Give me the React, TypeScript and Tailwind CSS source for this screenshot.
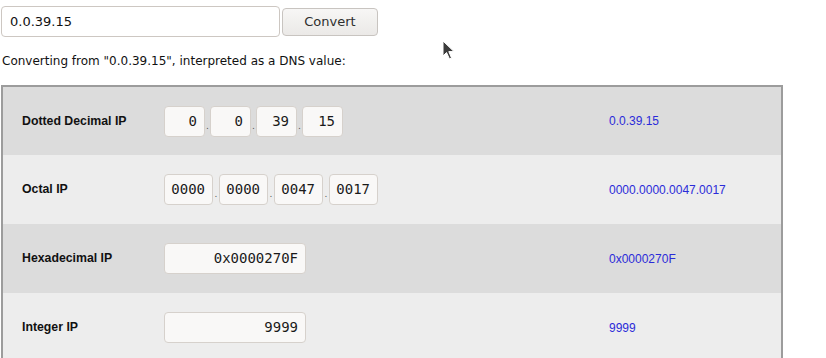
import React from 'react';

const sans = { fontFamily: '"DejaVu Sans", sans-serif' };
const arial = { fontFamily: '"Liberation Sans", Arial, sans-serif' };
const mono = { fontFamily: '"DejaVu Sans Mono", monospace' };

// one small readonly-looking box
const Box = ({ value, w }: { value: string; w: string }) => (
    <div
        className={`${w} h-[31px] flex items-center justify-end pr-[7px] bg-[#f9f8f7] border border-[#d6d1cc] rounded-[4px] text-[14px] text-[#1a1a1a]`}
        style={mono}
    >
        {value}
    </div>
);

const Dot = ({ w }: { w: string }) => (
    <span className={`${w} h-[31px] flex items-end justify-center pb-[6px] text-[9px] leading-none text-[#555]`} style={sans}>.</span>
);

const Quad = ({ parts, w, dw }: { parts: string[]; w: string; dw: string }) => (
    <div className="flex items-center">
        {parts.map((p, i) => (
            <React.Fragment key={i}>
                {i > 0 && <Dot w={dw} />}
                <Box value={p} w={w} />
            </React.Fragment>
        ))}
    </div>
);

const Row = ({ label, bg, h, children, result }: any) => (
    <div className={`flex items-center ${bg} ${h}`}>
        <div className="w-[161px] pl-[19px] text-[12.3px] font-bold text-[#111]" style={arial}>{label}</div>
        <div className="w-[445px]">{children}</div>
        <div className="text-[12px] text-[#2b2bd9]" style={arial}>{result}</div>
    </div>
);

const App = () => {
    return (
        <div className="relative w-[826px] h-[358px] bg-white overflow-hidden">
            <div className="flex items-center pt-[6px] pl-[1px] gap-[2px]">
                <div
                    className="w-[279px] h-[31px] flex items-center pl-[8px] bg-white border border-[#cdc7c2] rounded-[4px] text-[13px] text-[#111]"
                    style={sans}
                >
                    0.0.39.15
                </div>
                <button
                    className="w-[96px] h-[28px] border border-[#c8c4c0] rounded-[4px] bg-gradient-to-b from-[#f7f6f5] to-[#ebe9e7] text-[13px] text-[#2e2e2e]"
                    style={sans}
                >
                    Convert
                </button>
            </div>
            <div className="mt-[17px] pl-[2px] text-[12px] leading-[14px] text-[#111]" style={sans}>
                Converting from "0.0.39.15", interpreted as a DNS value:
            </div>
            <div className="mt-[17px] ml-[1px] w-[782px] border-2 border-[#9c9c9c]">
                <Row label="Dotted Decimal IP" bg="bg-[#dcdcdc]" h="h-[68px]" result="0.0.39.15">
                    <Quad parts={['0', '0', '39', '15']} w="w-[41px]" dw="w-[5px]" />
                </Row>
                <Row label="Octal IP" bg="bg-[#ededed]" h="h-[69px]" result="0000.0000.0047.0017">
                    <Quad parts={['0000', '0000', '0047', '0017']} w="w-[49px]" dw="w-[6px]" />
                </Row>
                <Row label="Hexadecimal IP" bg="bg-[#dcdcdc]" h="h-[69px]" result="0x0000270F">
                    <Box value="0x0000270F" w="w-[142px]" />
                </Row>
                <Row label="Integer IP" bg="bg-[#ededed]" h="h-[69px]" result="9999">
                    <Box value="9999" w="w-[142px]" />
                </Row>
            </div>
            {/* mouse pointer captured in the screenshot */}
            <svg className="absolute left-[442px] top-[40px]" width="14" height="21" viewBox="0 0 14 21">
                <path d="M1 1 L1 16 L4.5 12.5 L7.5 19 L9.5 18 L6.8 11.6 L12 11.6 Z" fill="#3c3c3c" stroke="#ffffff" strokeWidth="1" />
            </svg>
        </div>
    );
};

export default App;
